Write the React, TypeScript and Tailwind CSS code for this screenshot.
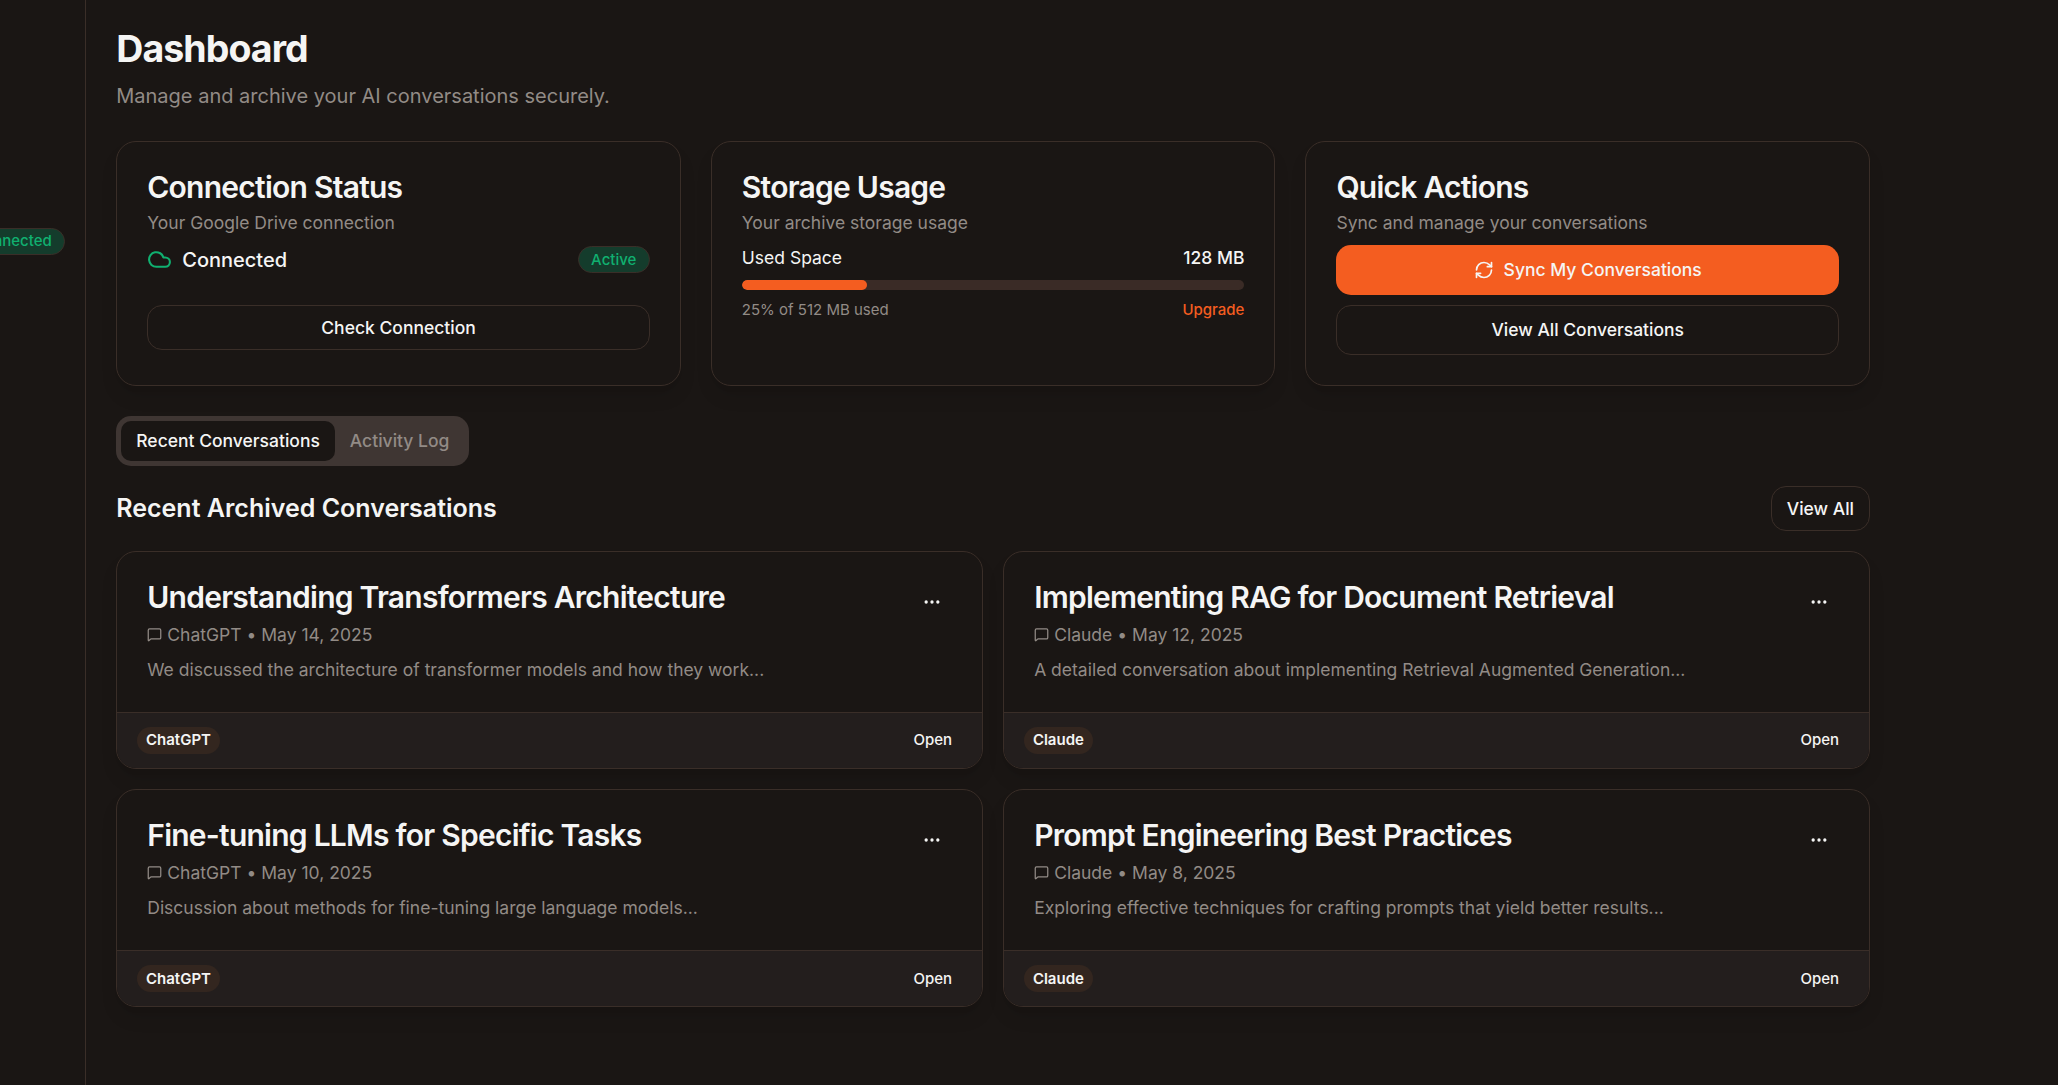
import { Cloud, Ellipsis, MessageSquare, RefreshCw } from 'lucide-react';

const conversations = [
  { title: 'Understanding Transformers Architecture', source: 'ChatGPT', date: 'May 14, 2025', summary: 'We discussed the architecture of transformer models and how they work...' },
  { title: 'Implementing RAG for Document Retrieval', source: 'Claude', date: 'May 12, 2025', summary: 'A detailed conversation about implementing Retrieval Augmented Generation...' },
  { title: 'Fine-tuning LLMs for Specific Tasks', source: 'ChatGPT', date: 'May 10, 2025', summary: 'Discussion about methods for fine-tuning large language models...' },
  { title: 'Prompt Engineering Best Practices', source: 'Claude', date: 'May 8, 2025', summary: 'Exploring effective techniques for crafting prompts that yield better results...' },
];

function CardHeader({ title, description }: { title: string; description: string }) {
  return (
    <div className="mb-2 flex flex-col gap-1.5">
      <h3 className="text-2xl leading-none font-semibold tracking-tight text-[#f5f5f4]">{title}</h3>
      <p className="text-sm text-[#928b86]">{description}</p>
    </div>
  );
}

function ConversationCard({ title, source, date, summary }: (typeof conversations)[number]) {
  return (
    <div className="flex flex-col overflow-hidden rounded-2xl border border-[#3a2e28] bg-[#1a1614] shadow-lg">
      <div className="flex items-start justify-between p-6">
        <div className="min-w-0">
          <h3 className="text-2xl leading-none font-semibold tracking-tight text-[#f5f5f4]">{title}</h3>
          <div className="mt-2 flex items-center text-sm text-[#928b86]">
            <MessageSquare className="mr-1 h-3 w-3" />
            <span>{source}</span>
            <span className="mx-1">•</span>
            <span>{date}</span>
          </div>
          <p className="mt-2 text-sm text-[#928b86]">{summary}</p>
        </div>
        <button className="flex h-8 w-8 shrink-0 items-center justify-center text-[#f5f5f4]">
          <Ellipsis className="h-4 w-4" />
        </button>
      </div>
      <div className="flex h-[45px] items-center justify-between border-t border-[#3a2e28] bg-[#231e1d] pr-6 pl-4">
        <span className="rounded-full bg-[#33261f] px-[7px] py-[3px] text-xs font-semibold text-[#f5f5f4]">{source}</span>
        <button className="text-xs font-medium text-[#f5f5f4]">Open</button>
      </div>
    </div>
  );
}

export default function App() {
  return (
    <div className="flex h-[868px] w-[1646.4px] overflow-hidden bg-[#1a1614] font-['Inter',sans-serif] [zoom:1.25]">
      <aside className="flex h-full w-[69px] shrink-0 justify-end overflow-hidden border-r border-[#3a2e28] pt-[182px] pr-4">
        <span className="h-[22px] shrink-0 rounded-full border border-[#3a2e28] bg-[#143c2c] px-2.5 py-0.5 text-xs font-medium text-[#10b070]">Connected</span>
      </aside>
      <main className="ml-6 w-[1403px] shrink-0 pt-[21px]">
        <h1 className="text-3xl font-bold tracking-tight text-[#f5f5f4]">Dashboard</h1>
        <p className="mt-2 text-base text-[#928b86]">Manage and archive your AI conversations securely.</p>

        <div className="mt-6 grid grid-cols-3 gap-6">
          <section className="rounded-2xl border border-[#3a2e28] bg-[#1a1614] p-6 shadow-lg">
            <CardHeader title="Connection Status" description="Your Google Drive connection" />
            <div className="flex items-center justify-between">
              <div className="flex items-center">
                <Cloud className="mr-2 h-5 w-5 text-[#10b070]" />
                <span className="text-base font-medium text-[#f5f5f4]">Connected</span>
              </div>
              <span className="rounded-full border border-[#3a2e28] bg-[#143c2c] px-2.5 py-0.5 text-xs font-medium text-[#10b070]">Active</span>
            </div>
            <button className="mt-6 h-9 w-full rounded-xl border border-[#3a2e28] text-sm font-medium text-[#f5f5f4]">Check Connection</button>
          </section>

          <section className="rounded-2xl border border-[#3a2e28] bg-[#1a1614] p-6 shadow-lg">
            <CardHeader title="Storage Usage" description="Your archive storage usage" />
            <div className="flex items-center justify-between text-sm text-[#f5f5f4]">
              <span>Used Space</span>
              <span className="font-medium">128 MB</span>
            </div>
            <div className="mt-2 h-2 w-full overflow-hidden rounded-full bg-[#3a2b26]">
              <div className="h-full w-1/4 rounded-full bg-[#f45d20]" />
            </div>
            <div className="mt-2 flex items-center justify-between text-xs">
              <span className="text-[#928b86]">25% of 512 MB used</span>
              <span className="font-medium text-[#f45d20]">Upgrade</span>
            </div>
          </section>

          <section className="rounded-2xl border border-[#3a2e28] bg-[#1a1614] p-6 shadow-lg">
            <CardHeader title="Quick Actions" description="Sync and manage your conversations" />
            <button className="flex h-10 w-full items-center justify-center rounded-xl bg-[#f45d20] text-sm font-medium text-[#f5f5f4]">
              <RefreshCw className="mr-2 h-4 w-4" />
              Sync My Conversations
            </button>
            <button className="mt-2 h-10 w-full rounded-xl border border-[#3a2e28] text-sm font-medium text-[#f5f5f4]">View All Conversations</button>
          </section>
        </div>

        <div className="mt-6 inline-flex h-10 items-center rounded-xl bg-[#3f3633] p-1">
          <button className="h-8 rounded-lg bg-[#1a1614] px-3 text-sm font-medium text-[#f5f5f4]">Recent Conversations</button>
          <button className="h-8 rounded-lg px-3 text-sm font-medium text-[#928b86]">Activity Log</button>
        </div>

        <div className="mt-4 flex h-9 items-center justify-between">
          <h2 className="text-xl font-semibold text-[#f5f5f4]">Recent Archived Conversations</h2>
          <button className="h-9 rounded-xl border border-[#3a2e28] px-3 text-sm font-medium text-[#f5f5f4]">View All</button>
        </div>

        <div className="mt-4 grid grid-cols-2 gap-4">
          {conversations.map((c) => (
            <ConversationCard key={c.title} {...c} />
          ))}
        </div>
      </main>
    </div>
  );
}
